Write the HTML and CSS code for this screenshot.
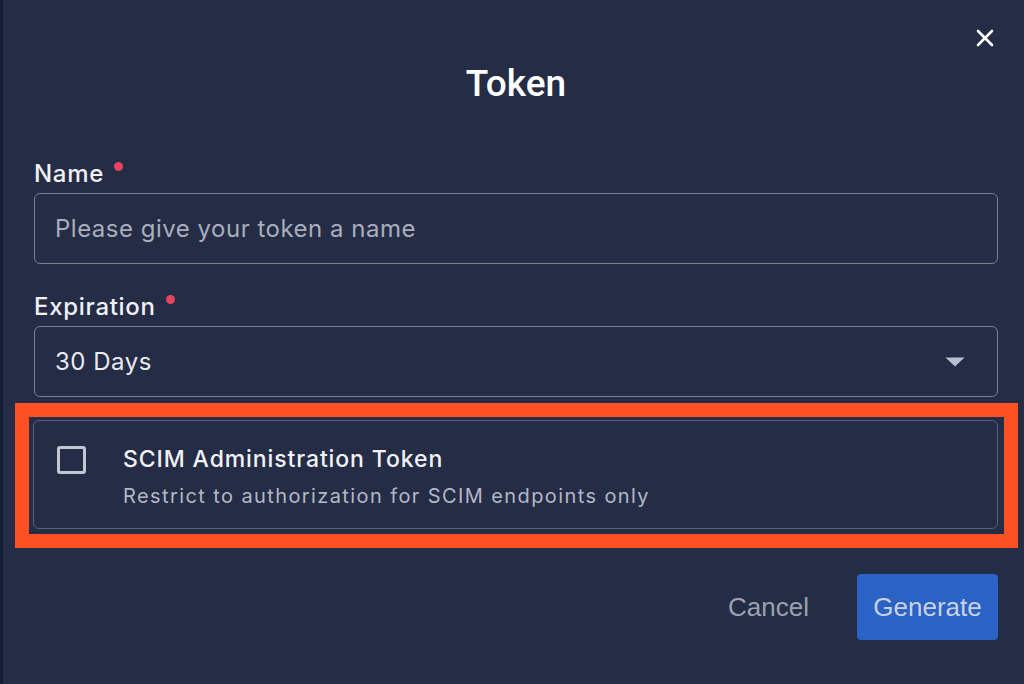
FILE: index.html
```html
<!DOCTYPE html>
<html lang="en">
<head>
<meta charset="utf-8">
<title>Token</title>
<link rel="stylesheet" href="styles.css">
</head>
<body>
<div class="dialog">
  <button class="close" aria-label="Close">
    <svg width="18" height="18" viewBox="0 0 18 18"><path d="M2 2 L16 16 M16 2 L2 16" stroke="#ffffff" stroke-width="2.6" stroke-linecap="round"/></svg>
  </button>
  <h1 class="title">Token</h1>

  <div class="field field-name">
    <label class="label">Name <span class="req"></span></label>
    <div class="input"><span class="placeholder">Please give your token a name</span></div>
  </div>

  <div class="field field-exp">
    <label class="label">Expiration <span class="req"></span></label>
    <div class="input select">
      <span class="value">30 Days</span>
      <svg class="caret" width="20" height="10" viewBox="0 0 20 10"><path d="M0.5 0.5 H19.5 L10 9.5 Z" fill="#b9bfd1"/></svg>
    </div>
  </div>

  <div class="highlight">
    <div class="option">
      <span class="checkbox"></span>
      <div class="option-text">
        <div class="option-title">SCIM Administration Token</div>
        <div class="option-desc">Restrict to authorization for SCIM endpoints only</div>
      </div>
    </div>
  </div>

  <div class="actions">
    <button class="btn btn-cancel">Cancel</button>
    <button class="btn btn-primary">Generate</button>
  </div>
</div>
</body>
</html>
```

FILE: styles.css
```css
* { box-sizing: border-box; }
html, body {
  margin: 0;
  padding: 0;
  background: #252c46;
}
body {
  width: 1024px;
  height: 684px;
  overflow: hidden;
  font-family: Inter, "Noto Sans", sans-serif;
}
.dialog {
  position: relative;
  height: 684px;
  border-left: 3px solid #171e35;
  padding: 0 26px 0 31px;
  display: flex;
  flex-direction: column;
}
.close {
  position: absolute;
  top: 29px;
  right: 30px;
  width: 18px;
  height: 18px;
  padding: 0;
  border: 0;
  background: transparent;
  display: flex;
}
.title {
  margin: 62px 0 0;
  text-align: center;
  font-family: Roboto, "Liberation Sans", sans-serif;
  font-weight: 500;
  font-size: 37px;
  line-height: 44px;
  color: #ffffff;
}
.field {
  display: flex;
  flex-direction: column;
  gap: 4px;
}
.field-name { margin-top: 53px; }
.field-exp { margin-top: 28px; }
.label {
  display: flex;
  align-items: flex-start;
  gap: 10px;
  font-size: 24px;
  line-height: 30px;
  font-weight: 500;
  letter-spacing: 0.7px;
  color: #f1f2f6;
}
.req {
  width: 9px;
  height: 9px;
  border-radius: 50%;
  background: #e8435f;
  margin-top: 3px;
}
.input {
  height: 71px;
  border: 1.5px solid #7c7e90;
  border-radius: 6px;
  display: flex;
  align-items: center;
  padding: 0 20px;
  font-size: 24px;
  letter-spacing: 0.5px;
}
.placeholder { color: #a9aebd; }
.select { justify-content: space-between; padding-right: 32px; }
.value { color: #e9ebf1; }
.highlight {
  margin: 6px -20px 0 -19px;
  border: 14px solid #fe5123;
  padding: 3px 6px 5px 4px;
}
.option {
  height: 109px;
  border: 1.5px solid #5a607b;
  border-radius: 6px;
  display: flex;
  align-items: flex-start;
  padding: 24px 0 0 23px;
  gap: 37px;
}
.checkbox {
  width: 29px;
  height: 28px;
  border: 3px solid #c3c7d4;
  border-radius: 3px;
  flex: none;
  margin-top: 1px;
}
.option-text {
  display: flex;
  flex-direction: column;
  gap: 10px;
}
.option-title {
  font-size: 23px;
  line-height: 28px;
  font-weight: 450;
  letter-spacing: 0.9px;
  color: #f1f2f6;
}
.option-desc {
  font-size: 20px;
  line-height: 26px;
  color: #b3b8c7;
  letter-spacing: 1.4px;
}
.actions {
  margin-top: 26px;
  display: flex;
  justify-content: flex-end;
  gap: 33px;
}
.btn {
  height: 66px;
  border: 0;
  border-radius: 4px;
  font-family: "Liberation Sans", Arial, sans-serif;
  font-size: 26px;
  padding: 0 15px;
  cursor: pointer;
}
.btn-cancel {
  background: transparent;
  color: #9ba1b0;
}
.btn-primary {
  width: 141px;
  background: #2a63c5;
  color: #c9d1e2;
}
```
